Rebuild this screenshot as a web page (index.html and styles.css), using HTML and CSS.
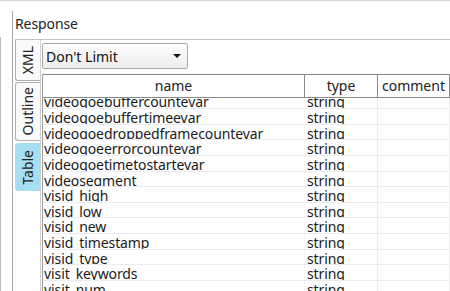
FILE: index.html
```html
<!DOCTYPE html>
<html>
<head>
<meta charset="utf-8">
<link rel="stylesheet" href="styles.css">
</head>
<body>
<div class="screen">
  <div class="edge"></div>
  <div class="panel">
    <div class="title">Response</div>
    <div class="tabview">
      <div class="tabs">
        <div class="tab tab-xml"><span>XML</span></div>
        <div class="tab tab-outline"><span>Outline</span></div>
        <div class="tab tab-table active"><span>Table</span></div>
      </div>
      <div class="content">
        <div class="select"><span class="select-text">Don't Limit</span><span class="arrow"></span></div>
        <div class="grid">
          <div class="head">
            <div class="hc">name</div>
            <div class="hc">type</div>
            <div class="hc">comment</div>
          </div>
          <div class="body">
            <div class="rows">
              <div class="row"><div class="c">videoqoebuffercountevar</div><div class="c">string</div><div class="c"></div></div>
              <div class="row"><div class="c">videoqoebuffertimeevar</div><div class="c">string</div><div class="c"></div></div>
              <div class="row"><div class="c">videoqoedroppedframecountevar</div><div class="c">string</div><div class="c"></div></div>
              <div class="row"><div class="c">videoqoeerrorcountevar</div><div class="c">string</div><div class="c"></div></div>
              <div class="row"><div class="c">videoqoetimetostartevar</div><div class="c">string</div><div class="c"></div></div>
              <div class="row"><div class="c">videosegment</div><div class="c">string</div><div class="c"></div></div>
              <div class="row"><div class="c">visid_high</div><div class="c">string</div><div class="c"></div></div>
              <div class="row"><div class="c">visid_low</div><div class="c">string</div><div class="c"></div></div>
              <div class="row"><div class="c">visid_new</div><div class="c">string</div><div class="c"></div></div>
              <div class="row"><div class="c">visid_timestamp</div><div class="c">string</div><div class="c"></div></div>
              <div class="row"><div class="c">visid_type</div><div class="c">string</div><div class="c"></div></div>
              <div class="row"><div class="c">visit_keywords</div><div class="c">string</div><div class="c"></div></div>
              <div class="row"><div class="c">visit_num</div><div class="c">string</div><div class="c"></div></div>
            </div>
          </div>
        </div>
      </div>
    </div>
  </div>
</div>
</body>
</html>
```

FILE: styles.css
```css
* { box-sizing: border-box; }
html, body {
  margin: 0;
  padding: 0;
  background: #ffffff;
}
body {
  font-family: "Noto Sans", "Open Sans", sans-serif;
  color: #1a1a1a;
  width: 450px;
  height: 291px;
  overflow: hidden;
}
.screen {
  display: flex;
  width: 450px;
  height: 291px;
  border-top: 1px solid #d6d6d6;
}
.edge {
  width: 12px;
  flex: none;
  margin-top: 36px;
  border-left: 1px solid #b8b8b8;
}
.panel {
  flex: 1;
  margin-top: 10px;
  border-left: 1px solid #a9a9a9;
  display: flex;
  flex-direction: column;
  min-width: 0;
}
.title {
  height: 28px;
  padding-left: 2px;
  font-size: 14px;
  line-height: 26px;
  letter-spacing: -0.1px;
  color: #222;
}
.tabview {
  flex: 1;
  margin-left: 2px;
  border-top: 1px solid #c4c4c4;
  display: flex;
  min-height: 0;
}
.tabs {
  width: 25px;
  flex: none;
  display: flex;
  flex-direction: column;
}
.tab {
  border: 1px solid #b0b0b0;
  border-right: none;
  border-radius: 3px 0 0 3px;
  background: #fafafa;
  display: flex;
  align-items: center;
  justify-content: center;
  font-size: 14px;
  color: #222;
}
.tab span {
  writing-mode: vertical-rl;
  transform: rotate(180deg);
  line-height: 22px;
}
.tab-xml {
  height: 41px;
  border-top: none;
  border-radius: 0 0 0 3px;
}
.tab-outline {
  height: 59px;
  margin-top: 1px;
}
.tab-table {
  height: 48px;
  margin-top: 2px;
}
.tab.active {
  background: #a6dff3;
  border-color: #a6dff3;
}
.content {
  flex: 1;
  min-width: 0;
  border-left: 1px solid #cfcfcf;
  padding: 3px 0 0 1px;
  display: flex;
  flex-direction: column;
}
.select {
  width: 146px;
  height: 26px;
  border: 1px solid #a8a8a8;
  border-radius: 2px;
  background: linear-gradient(#fdfdfd, #ececec);
  display: flex;
  align-items: center;
  justify-content: space-between;
  padding: 0 6px 0 3px;
  font-size: 14px;
  color: #111;
}
.arrow {
  width: 0;
  height: 0;
  border-left: 4px solid transparent;
  border-right: 4px solid transparent;
  border-top: 4px solid #111;
}
.grid {
  margin-top: 5px;
  flex: 1;
  min-height: 0;
  border-left: 1px solid #9c9c9c;
  display: flex;
  flex-direction: column;
}
.head {
  display: grid;
  grid-template-columns: 262px 73px 1fr;
  height: 24px;
  border-top: 1px solid #8a8a8a;
  border-bottom: 1px solid #8a8a8a;
  flex: none;
}
.hc {
  border-right: 1px solid #8a8a8a;
  text-align: center;
  font-size: 14px;
  line-height: 21px;
  color: #222;
}
.body {
  flex: 1;
  overflow: hidden;
}
.rows {
  margin-top: -4.64px;
}
.row {
  display: grid;
  grid-template-columns: 262px 73px 1fr;
  height: 15.64px;
  border-bottom: 1px solid #ebebeb;
}
.c {
  height: 14.64px;
  overflow: hidden;
  padding-left: 1px;
  font-size: 14px;
  letter-spacing: -0.1px;
  line-height: 17.4px;
  white-space: nowrap;
  border-right: 1px solid #eeeeee;
}
.c:first-child {
  border-right-color: #f6f6f6;
}
.c + .c {
  padding-left: 2px;
}
```
